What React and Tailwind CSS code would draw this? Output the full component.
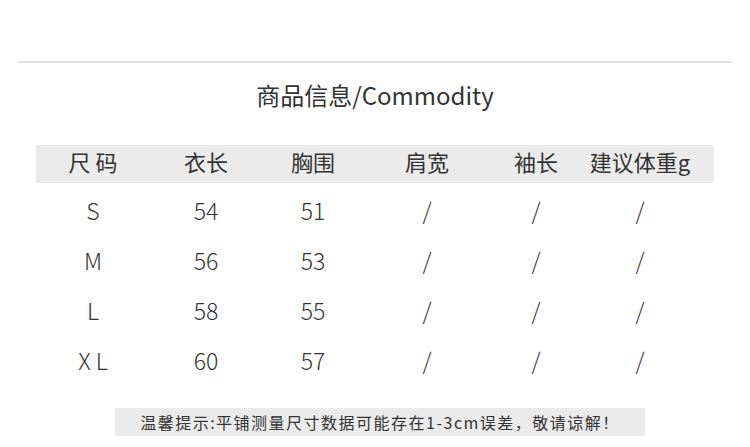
import React from 'react';

const headers = ['尺 码', '衣长', '胸围', '肩宽', '袖长', '建议体重g'];

const rows = [
  ['S', '54', '51', '/', '/', '/'],
  ['M', '56', '53', '/', '/', '/'],
  ['L', '58', '55', '/', '/', '/'],
  ['X L', '60', '57', '/', '/', '/'],
];

// column widths picked so the cell centres sit where the reference has them
const cols = 'grid grid-cols-[114px_112px_102px_126px_92px_116px]';

const App = () => {
  return (
    <div
      className="w-[750px] h-[447px] bg-white text-[#333333] overflow-hidden"
      style={{ fontFamily: '"Noto Sans CJK SC", "Noto Sans", sans-serif' }}
    >
      {/* Top rule */}
      <div className="pt-[61px] px-[18px]">
        <div className="h-[2px] bg-[#e3e3e3]" />
      </div>

      {/* Title */}
      <h1 className="mt-[17px] text-center text-[24px] leading-[30px] text-[#333333]">
        商品信息/Commodity
      </h1>

      {/* Size table */}
      <div className="mt-[35px] mx-[36px] w-[678px]">
        <div className={`${cols} h-[38px] items-center bg-[#ebebeb] text-[22px] pb-[6px]`}>
          {headers.map((h) => (
            <div key={h} className="text-center leading-none">{h}</div>
          ))}
        </div>

        <div className="pt-[2px]">
          {rows.map((r) => (
            <div key={r[0]} className={`${cols} h-[50px] items-center text-[23px] font-light`}>
              {r.map((v, i) => (
                <div key={i} className="text-center leading-none">{v}</div>
              ))}
            </div>
          ))}
        </div>
      </div>

      {/* Footer note */}
      <div className="mt-[23px] flex justify-center">
        <div className="w-[530px] h-[28px] ml-[10px] bg-[#ebebeb] flex items-center justify-center text-[16px] tracking-[1.5px]">
          温馨提示:平铺测量尺寸数据可能存在1-3cm误差，敬请谅解！
        </div>
      </div>
    </div>
  );
};

export default App;
